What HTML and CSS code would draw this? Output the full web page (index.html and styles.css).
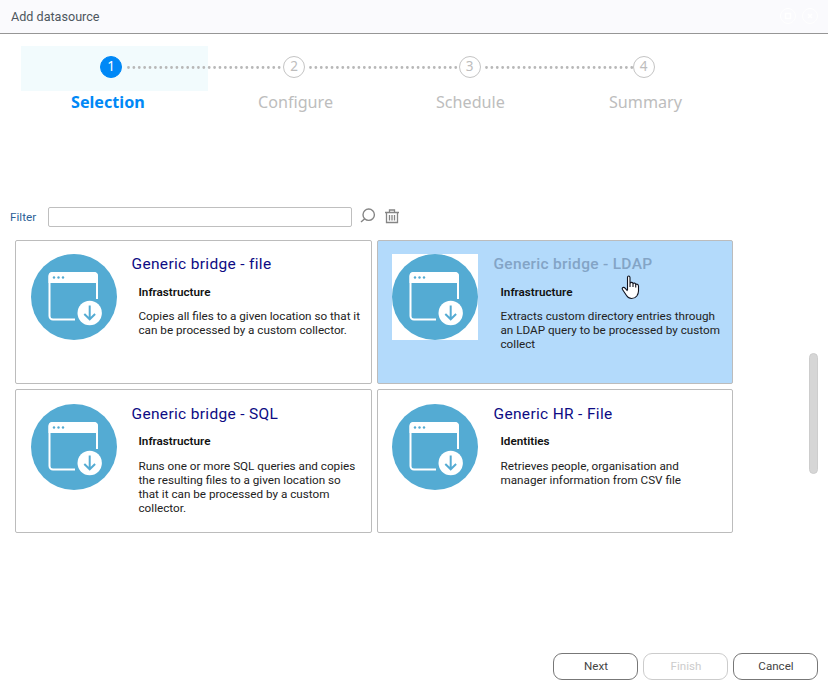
FILE: index.html
```html
<!DOCTYPE html>
<html lang="en">
<head>
<meta charset="utf-8">
<title>Add datasource</title>
<link rel="stylesheet" href="styles.css">
</head>
<body>
<svg width="0" height="0" class="defs" aria-hidden="true">
  <symbol id="bridge" viewBox="0 0 86 86">
    <circle cx="43" cy="43" r="43" fill="#54abd3"/>
    <path d="M66 45V22.5a3.5 3.5 0 0 0-3.500-3.500H22a3.500 3.500 0 0 0-3.500 3.500V62a3.500 3.500 0 0 0 3.500 3.500h22" fill="none" stroke="#fff" stroke-width="2"/>
    <path d="M17.500 29V22a4 4 0 0 1 4-4h41.500a4 4 0 0 1 4 4v7z" fill="#fff"/>
    <g fill="#54abd3"><circle cx="23" cy="23.500" r="1.200"/><circle cx="27.500" cy="23.500" r="1.200"/><circle cx="32" cy="23.500" r="1.200"/></g>
    <circle cx="58.700" cy="59" r="12.200" fill="#fff"/>
    <path d="M58.700 51.500V65M53.300 60L58.700 65.300L64.100 60" fill="none" stroke="#54abd3" stroke-width="2"/>
  </symbol>
</svg>
<header class="titlebar">
  <span>Add datasource</span>
  <svg class="window-icons" width="40" height="18" fill="none" stroke="#fff"><circle cx="8" cy="8" r="7.500"/><path d="M5.500 5.500h5v5h-5z" stroke-width="1.500"/><circle cx="30" cy="8" r="7.500"/><path d="M28 6l4 4M32 6l-4 4" stroke-width="1.500"/></svg>
</header>
<nav class="stepper">
  <div class="track">
    <span class="num active">1</span><svg class="dots d1"><path d="M1.500 1.500H156"/></svg>
    <span class="num">2</span><svg class="dots d2"><path d="M1.500 1.500H150"/></svg>
    <span class="num">3</span><svg class="dots d3"><path d="M1.500 1.500H148"/></svg>
    <span class="num">4</span>
  </div>
  <div class="labels"><b>Selection</b><span>Configure</span><span>Schedule</span><span>Summary</span></div>
</nav>
<div class="filter">
  <label for="filter">Filter</label>
  <input id="filter" type="text">
  <svg class="search" width="16" height="16" fill="none" stroke="#858585" stroke-width="1.400"><circle cx="8.700" cy="6.700" r="5.700"/><path d="M4.700 10.700L1 14"/></svg>
  <svg class="trash" width="14" height="15" fill="none" stroke="#858585"><path d="M0 3.500h14M4.500 3V1h5v2M1.500 3.500v10h11v-10M4.500 6v5.500M7 6v5.500M9.500 6v5.500" stroke-width="1.300"/></svg>
</div>
<main class="cards">
  <article class="card">
    <svg class="pic"><use href="#bridge"/></svg>
    <div class="info"><h2>Generic bridge - file</h2><h3>Infrastructure</h3><p>Copies all files to a given location so that it<br>can be processed by a custom collector.</p></div>
  </article>
  <article class="card selected">
    <svg class="pic"><use href="#bridge"/></svg>
    <div class="info"><h2>Generic bridge - LDAP</h2><h3>Infrastructure</h3><p>Extracts custom directory entries through<br>an LDAP query to be processed by custom<br>collect</p></div>
    <svg class="cursor" width="20" height="26" viewBox="0 0 20 26"><path d="M6.500 15V2.500Q6.500 1 7.700 1T9 2.500V8.500Q9.500 7.200 10.700 7.400T12 8.800Q12.500 7.800 13.600 8.100T14.700 9.600Q15.300 8.800 16.300 9.200T17.500 11V16Q17.500 18.500 15.800 21Q14 23.500 10.500 23.500Q7.500 23.500 5.500 20.500L1.500 14.500Q.8 13 2 12.500T4.300 13.300L6.500 16M9 8.500V12M12 9V12M14.700 9.600V12.500" fill="#fff" stroke="#10131f" stroke-width="1.100"/></svg>
  </article>
  <article class="card low">
    <svg class="pic"><use href="#bridge"/></svg>
    <div class="info"><h2>Generic bridge - SQL</h2><h3>Infrastructure</h3><p>Runs one or more SQL queries and copies<br>the resulting files to a given location so<br>that it can be processed by a custom<br>collector.</p></div>
  </article>
  <article class="card low">
    <svg class="pic"><use href="#bridge"/></svg>
    <div class="info"><h2>Generic HR - File</h2><h3>Identities</h3><p>Retrieves people, organisation and<br>manager information from CSV file</p></div>
  </article>
</main>
<div class="scrollbar"></div>
<footer class="actions"><button>Next</button><button disabled>Finish</button><button>Cancel</button></footer>
</body>
</html>
```
FILE: styles.css
```css
* { box-sizing: border-box; }
body {
  position: relative;
  display: flex;
  flex-direction: column;
  width: 828px;
  height: 692px;
  margin: 0;
  overflow: hidden;
  background: #fff;
  font-family: Roboto, "Liberation Sans", sans-serif;
}
svg { display: block; flex: none; }
.defs { position: absolute; }
.titlebar {
  display: flex;
  justify-content: space-between;
  height: 34px;
  padding: 8px 10px 0 11px;
  border-bottom: 1px solid #969696;
  background: #fafafd;
  color: #4d565e;
  font-size: 12.6px;
  line-height: 17px;
}
.window-icons { margin-right: -2px; }
.stepper {
  height: 172px;
  padding-top: 12px;
  font-family: "Noto Sans", sans-serif;
  color: #bdbdbd;
}
.track {
  display: flex;
  align-items: center;
  height: 45px;
  margin-left: 21px;
  padding: 0 0 3px 79px;
  background: linear-gradient(#f2fbfd, #f2fbfd) 0 0 / 187px 45px no-repeat;
}
.num {
  flex: none;
  width: 22px;
  height: 22px;
  border: 1px solid #c4c4c4;
  border-radius: 50%;
  background: #fff;
  text-align: center;
  font-size: 13.5px;
  line-height: 19px;
}
.num.active { border-color: #0088f6; background: #0088f6; color: #fff; }
.dots { height: 3px; }
.dots path {
  fill: none;
  stroke: #b8b8b8;
  stroke-width: 2.8;
  stroke-linecap: round;
  stroke-dasharray: 0 5.38;
}
.d1 { width: 156px; margin: 0 0 0 5px; }
.d2 { width: 149.5px; margin: 0 0 0 4px; }
.d3 { width: 148px; margin: 0 0 0 4px; }
.labels {
  display: grid;
  grid-template-columns: 187px 178px 173px 100px;
  padding-left: 71px;
  font-size: 16.15px;
  line-height: 22px;
}
.labels b { color: #0088f6; }
.filter { display: flex; height: 34px; }
.filter label { width: 38px; margin-left: 10px; color: #2c5f97; font-size: 11.7px; line-height: 22px; }
.filter input { width: 304px; height: 20px; margin-top: 1px; padding: 0; border: 1px solid #bfbfbf; border-radius: 2px; }
.search { margin: 2px 0 0 7.5px; }
.trash { margin: 3px 0 0 9.5px; }
.cards {
  display: grid;
  grid-template-columns: 357px 356px;
  grid-template-rows: 144px 144px;
  gap: 5px;
  margin-left: 15px;
}
.card {
  position: relative;
  display: flex;
  padding: 13px 0 0 15px;
  border: 1px solid #bcbcbc;
  border-radius: 2px;
  background: #fff;
}
.card:nth-child(even) { padding-left: 14px; }
.low { padding-top: 14px; }
.pic { width: 86px; height: 86px; background: #fff; }
.info { padding-left: 14.5px; color: #222; white-space: nowrap; }
.card:nth-child(even) .info { padding-left: 15.5px; }
h2 { margin: 0; color: #0d0b84; font-size: 15.5px; font-weight: 450; line-height: 20px; letter-spacing: .33px; }
h3 { margin: 11px 0 0 7px; color: #111; font-size: 11.7px; font-weight: 650; line-height: 14px; }
.low h3 { margin-top: 10px; }
p { margin: 10px 0 0 7px; font-size: 11.7px; line-height: 14px; }
.low p { margin-top: 11px; }
.selected { background: #b3dafb; }
.selected h2 { color: #83a4c6; font-weight: 500; letter-spacing: .3px; }
.cursor { position: absolute; left: 243px; top: 34px; }
.scrollbar { position: absolute; left: 809px; top: 353px; width: 9px; height: 121px; border: 1px solid #cdcdcd; border-radius: 5px; background: #d6d6d6; }
.actions { display: flex; justify-content: flex-end; gap: 5px; margin-top: 120px; padding-right: 10px; }
button { width: 85px; height: 27px; padding: 0 0 1px 1px; border: 1px solid #777; border-radius: 9px; background: #fff; color: #444; font: 11.6px Roboto, sans-serif; }
button:disabled { border-color: #ccc; color: #ccc; }
```
